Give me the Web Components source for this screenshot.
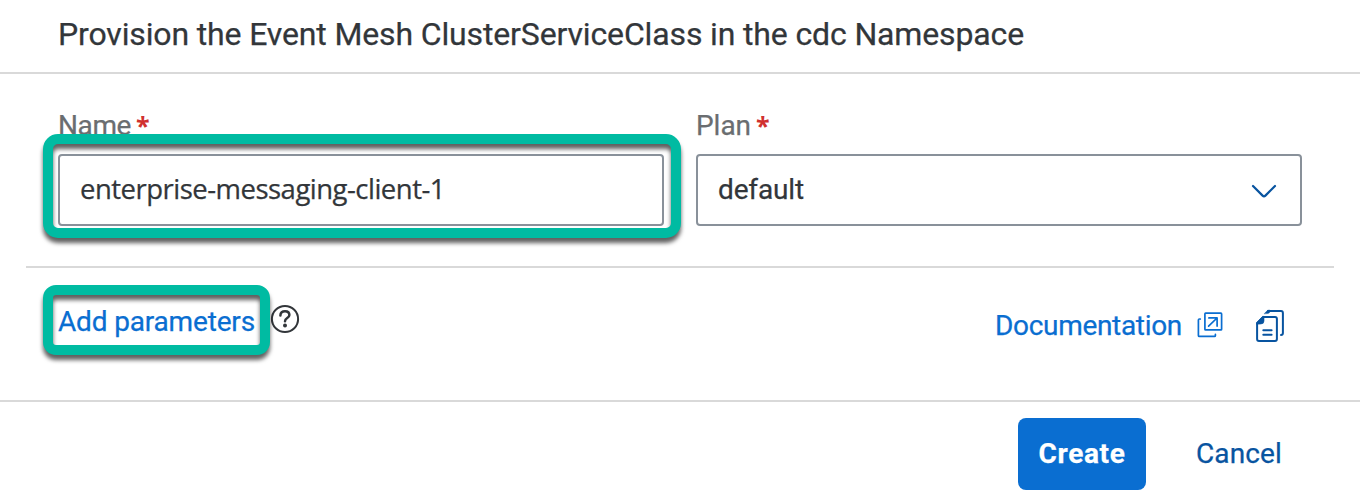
<!DOCTYPE html>
<html lang="en"><head><meta charset="utf-8"><title>Provision service</title>
<style>
body{margin:0;background:#fff;color:#32363a;font-family:Roboto,"Open Sans",sans-serif;font-size:28px}
</style></head><body>
<provision-dialog></provision-dialog>
<script>
const define=(name,html,ready)=>{
  const t=document.createElement('template');t.innerHTML=html;
  customElements.define(name,class extends HTMLElement{
    connectedCallback(){
      if(this.shadowRoot)return;
      this.attachShadow({mode:'open'}).append(t.content.cloneNode(true));
      if(ready)ready(this);
    }
  });
};

// Single line of text, tracked so that it fills the width given in pixels.
define('fit-text',`<style>:host{display:block;white-space:pre;flex:none}span{display:inline-block;white-space:pre;-webkit-text-stroke:.25px currentColor}</style><span><slot></slot></span>`,el=>{
  const s=el.shadowRoot.querySelector('span');
  const w=+el.getAttribute('width'),n=el.textContent.length;
  el.style.width=w+'px';
  s.style.letterSpacing=((w-s.getBoundingClientRect().width)/n).toFixed(3)+'px';
});

define('focus-frame',`<style>
:host{position:absolute;box-sizing:border-box;border:10px solid #00bba2;border-radius:15px;filter:drop-shadow(0 5px 2px rgba(0,0,0,.62));pointer-events:none}
</style>`);

define('form-field',`<style>
:host{display:block;position:relative;width:606px}
.label{display:flex;gap:5px;height:32px;line-height:32px;color:#6a6d70;margin-bottom:12px}
.star{color:#d0302f;font:700 25px/31px "Open Sans",sans-serif;}
.box{box-sizing:border-box;height:72px;border:2px solid #89919a;border-radius:4px;padding:0 23px 0 20px;display:flex;align-items:center;justify-content:space-between;line-height:34px}
</style><div class="label"><slot name="label"></slot><span class="star">*</span></div>
<div class="box"><slot></slot><slot name="icon"></slot></div><slot name="frame"></slot>`);

define('action-button',`<style>
:host{display:flex;box-sizing:border-box;height:72px;border-radius:8px;align-items:center;justify-content:center;color:#0854a0;line-height:34px}
:host([primary]){background:#0a6ed1;color:#fff;font-weight:700}
</style><slot></slot>`);

define('ui-icon',`<style>:host{display:block;flex:none}svg{display:block;fill:none;stroke:currentColor;stroke-linecap:round;stroke-linejoin:round}</style><div></div>`,el=>{
  const icons={
    down:'<svg width="26" height="16" stroke-width="2.2"><path d="M2 2 11.6 11.6Q13 13 14.4 11.6L24 2"/></svg>',
    help:'<svg width="30" height="30"><circle cx="15" cy="15" r="13.1" stroke-width="2"/><path d="M10.4 11.4C10.4 8.5 12.3 7.2 15 7.2S19.4 8.7 19.4 11.1C19.4 14.1 15 14 15 17.2" stroke-width="2.5"/><circle cx="15" cy="21.6" r="2" fill="currentColor" stroke="none"/></svg>',
    link:'<svg width="26" height="26" stroke-width="1.7"><rect x="7.9" y="1.2" width="16.7" height="16.7" rx=".7"/><path d="M3.3 7H2.4Q1.4 7 1.4 8V23.4Q1.4 24.4 2.4 24.4H17.4Q18.4 24.4 18.4 23.4V22.4M11.9 5.9H20.1V14.1M20 6 11.6 14.2"/></svg>',
    docs:'<svg width="30" height="34" stroke-width="2"><path d="M8.2 7.9H20Q21.9 7.9 21.9 9.8V30Q21.9 31.9 20 31.9H4Q2.1 31.9 2.1 30V14.2Z"/><path d="M1.6 15V13.6L7.6 7.4H9V12Q9 15 6 15Z" fill="currentColor" stroke-width=".6"/><path d="M8.3 21.3H16.6M8.3 25.7H16.6"/><path d="M13 2H26Q27.9 2 27.9 3.9V24Q27.9 25.9 26 25.9"/><path d="M9.3 4.6 12.8 1.1H15V2.5Q14.6 4.6 12.6 4.6Z" fill="currentColor" stroke-width=".4"/></svg>'};
  el.shadowRoot.querySelector('div').innerHTML=icons[el.getAttribute('name')];
});

define('provision-dialog',`<style>
:host{display:flex;flex-direction:column;height:502px;background:#fff}
header{box-sizing:border-box;height:74px;border-bottom:2px solid #d9d9d9;padding:15px 58px 0;font-size:32px;line-height:38px}
.fields{box-sizing:border-box;height:194px;margin:0 26px;padding:36px 32px 0;border-bottom:2px solid #d9d9d9;display:flex;gap:32px}
.fields ui-icon{color:#0854a0;margin-top:4px}
.links{box-sizing:border-box;height:132px;padding:0 75px 0 58px;display:flex;justify-content:space-between;color:#0a6ed1;line-height:34px}
.left{position:relative;display:flex;align-items:flex-start;padding-top:37px}
.left ui-icon{color:#32363a;margin:-1px 0 0 14.5px}
.right{display:flex;align-items:flex-start;padding-top:41px}
.right ui-icon:nth-of-type(1){margin:3px 0 0 15px}
.right ui-icon:nth-of-type(2){margin:0 0 0 32px;color:#0854a0}
footer{box-sizing:border-box;height:102px;border-top:2px solid #d9d9d9;padding:16px 57px 0;display:flex;justify-content:flex-end;gap:29px}
action-button{width:128px}
</style>
<header><fit-text width="966">Provision the Event Mesh ClusterServiceClass in the cdc Namespace</fit-text></header>
<div class="fields">
<form-field><fit-text slot="label" width="73">Name</fit-text><fit-text width="365" style="font-family:'Open Sans';font-size:27.5px;margin-top:-2px;-webkit-text-stroke:.5px">enterprise-messaging-client-1</fit-text>
<focus-frame slot="frame" style="left:-15px;top:24px;width:638px;height:104px"></focus-frame></form-field>
<form-field><fit-text slot="label" width="55">Plan</fit-text><fit-text width="86">default</fit-text><ui-icon slot="icon" name="down"></ui-icon></form-field>
</div>
<div class="links"><div class="left"><fit-text width="197">Add parameters</fit-text><ui-icon name="help"></ui-icon>
<focus-frame style="left:-15px;top:17px;width:227px;height:70px;border-radius:13px"></focus-frame></div>
<div class="right"><fit-text width="187">Documentation</fit-text><ui-icon name="link"></ui-icon><ui-icon name="docs"></ui-icon></div></div>
<footer><action-button primary><fit-text width="87">Create</fit-text></action-button><action-button><fit-text width="86">Cancel</fit-text></action-button></footer>`);
</script></body></html>
